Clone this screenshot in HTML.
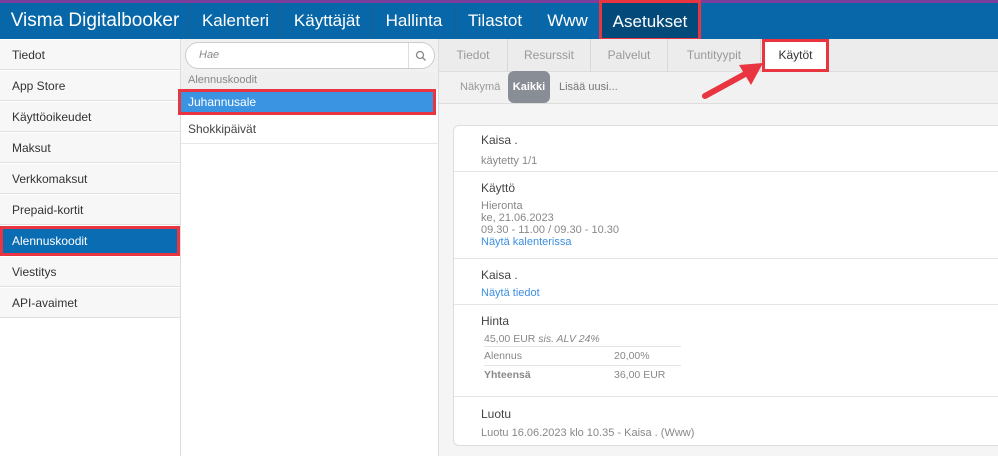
<!DOCTYPE html>
<html><head><meta charset="utf-8"><style>
*{margin:0;padding:0;box-sizing:border-box}
body{width:998px;height:456px;overflow:hidden;background:#f5f5f5;font-family:"Liberation Sans",sans-serif;font-size:12px;color:#444;position:relative}
.abs{position:absolute}
#top{left:0;top:0;width:998px;height:3px;background:#7a3f9d}
#bar{left:0;top:3px;width:998px;height:36px;background:#0867a8}
.nav{position:absolute;top:3px;height:36px;line-height:36px;color:#fff;font-size:17px;border-left:1px solid #1c5d92;text-align:center}
.side{position:absolute;left:0;width:180px;height:30px;line-height:30px;padding-left:12px;background:#f7f7f7;border-bottom:1px solid #e0e0e0;color:#333;font-size:12px}
.tab{position:absolute;top:39px;height:33px;line-height:33px;text-align:center;color:#999;font-size:12px;border-right:1px solid #d8d8d8}
.sec{position:absolute;left:454px;width:560px;border-top:1px solid #e4e4e4;padding-left:27px}
.h{font-size:12px;color:#444}
.g{color:#888;font-size:11px;line-height:12px}
.l{color:#3d8fe0;font-size:11px}
</style></head><body>
<div class="abs" id="top"></div>
<div class="abs" id="bar"></div>
<div class="nav" style="left:0;width:190px;border:none;font-size:19px">Visma Digitalbooker</div>
<div class="nav" style="left:189px;width:92px">Kalenteri</div>
<div class="nav" style="left:281px;width:91px">Käyttäjät</div>
<div class="nav" style="left:372px;width:83px">Hallinta</div>
<div class="nav" style="left:455px;width:79px">Tilastot</div>
<div class="nav" style="left:534px;width:66px">Www</div>
<div class="abs" style="left:599px;top:0;width:102px;height:41px;background:#034a7a;border:3px solid #e8353f;color:#fff;font-size:17px;line-height:37px;text-align:center">Asetukset</div>

<div class="abs" style="left:0;top:39px;width:181px;height:417px;background:#fff;border-right:1px solid #ddd"></div>
<div class="side" style="top:40px">Tiedot</div>
<div class="side" style="top:71px">App Store</div>
<div class="side" style="top:102px">Käyttöoikeudet</div>
<div class="side" style="top:133px">Maksut</div>
<div class="side" style="top:164px">Verkkomaksut</div>
<div class="side" style="top:195px">Prepaid-kortit</div>
<div class="side" style="top:226px;background:#0a6db3;color:#fff;border:3px solid #e8353f;line-height:24px;padding-left:9px">Alennuskoodit</div>
<div class="side" style="top:257px">Viestitys</div>
<div class="side" style="top:288px">API-avaimet</div>

<div class="abs" style="left:181px;top:39px;width:258px;height:417px;background:#fff;border-right:1px solid #ddd"></div>
<div class="abs" style="left:181px;top:39px;width:257px;height:34px;background:#f1f1f1"></div>
<div class="abs" style="left:185px;top:42px;width:250px;height:27px;background:#fff;border:1px solid #ccc;border-radius:14px;font-style:italic;color:#888;font-size:11px;line-height:25px;padding-left:13px">Hae</div>
<div class="abs" style="left:408px;top:43px;width:1px;height:25px;background:#ddd"></div>
<svg class="abs" style="left:415px;top:50px" width="12" height="12"><circle cx="5" cy="5" r="3.5" fill="none" stroke="#888" stroke-width="1.3"/><line x1="7.5" y1="7.5" x2="10.5" y2="10.5" stroke="#888" stroke-width="1.3"/></svg>
<div class="abs" style="left:181px;top:73px;width:257px;height:16px;background:#efefef;color:#888;font-size:11px;line-height:14px;padding-left:7px">Alennuskoodit</div>
<div class="abs" style="left:178px;top:89px;width:258px;height:26px;background:#3b94e2;border:3px solid #e8353f;color:#fff;font-size:12px;line-height:20px;padding-left:7px">Juhannusale</div>
<div class="abs" style="left:181px;top:117px;width:257px;height:27px;border-bottom:1px solid #e8e8e8;color:#444;line-height:25px;padding-left:7px">Shokkipäivät</div>

<div class="abs" style="left:439px;top:39px;width:559px;height:33px;background:#ececec;border-bottom:1px solid #ddd"></div>
<div class="tab" style="left:439px;width:69px">Tiedot</div>
<div class="tab" style="left:508px;width:83px">Resurssit</div>
<div class="tab" style="left:591px;width:77px">Palvelut</div>
<div class="tab" style="left:668px;width:93px">Tuntityypit</div>
<div class="abs" style="left:762px;top:39px;width:67px;height:33px;background:#fff;border:3px solid #e8353f;text-align:center;line-height:27px;color:#333">Käytöt</div>
<div class="abs" style="left:439px;top:72px;width:559px;height:32px;background:#f1f1f1;border-bottom:1px solid #ddd"></div>
<div class="abs" style="left:460px;top:72px;line-height:30px;color:#999;font-size:11px">Näkymä</div>
<div class="abs" style="left:508px;top:71px;width:42px;height:32px;background:#898d96;border-radius:6px;color:#fff;font-size:11px;font-weight:bold;line-height:32px;text-align:center">Kaikki</div>
<div class="abs" style="left:559px;top:72px;line-height:30px;color:#777;font-size:11px">Lisää uusi...</div>
<svg class="abs" style="left:695px;top:55px" width="80" height="50"><line x1="10" y1="41" x2="52" y2="18" stroke="#e8353f" stroke-width="6" stroke-linecap="round"/><polygon points="68,8 44,10 56,30" fill="#e8353f"/></svg>

<div class="abs" style="left:453px;top:125px;width:560px;height:321px;background:#fff;border:1px solid #ddd;border-radius:6px"></div>
<div class="sec" style="top:125px;border:none;height:46px;padding-top:8px"><div class="h">Kaisa .</div><div class="g" style="margin-top:8px">käytetty 1/1</div></div>
<div class="sec" style="top:171px;height:87px;padding-top:9px"><div class="h">Käyttö</div><div class="g" style="margin-top:5px">Hieronta<br>ke, 21.06.2023<br>09.30 - 11.00 / 09.30 - 10.30</div><div class="l">Näytä kalenterissa</div></div>
<div class="sec" style="top:258px;height:46px;padding-top:9px"><div class="h">Kaisa .</div><div class="l" style="margin-top:5px">Näytä tiedot</div></div>
<div class="sec" style="top:304px;height:92px;padding-top:9px"><div class="h">Hinta</div>
<div class="g" style="margin:5px 0 0 3px;font-size:10.5px;width:197px;height:14px;border-bottom:1px solid #e4e4e4">45,00 EUR <i>sis. ALV 24%</i></div>
<div class="g" style="margin-left:3px;font-size:10.5px;width:197px;height:19px;line-height:19px;border-bottom:1px solid #e4e4e4">Alennus<span style="position:absolute;left:160px">20,00%</span></div>
<div class="g" style="margin-left:3px;font-size:10.5px;width:197px;height:19px;line-height:19px;font-weight:bold">Yhteensä<span style="position:absolute;left:160px;font-weight:normal">36,00 EUR</span></div></div>
<div class="sec" style="top:396px;height:49px;padding-top:10px"><div class="h">Luotu</div><div class="g" style="margin-top:6px">Luotu 16.06.2023 klo 10.35 - Kaisa . (Www)</div></div>
</body></html>
